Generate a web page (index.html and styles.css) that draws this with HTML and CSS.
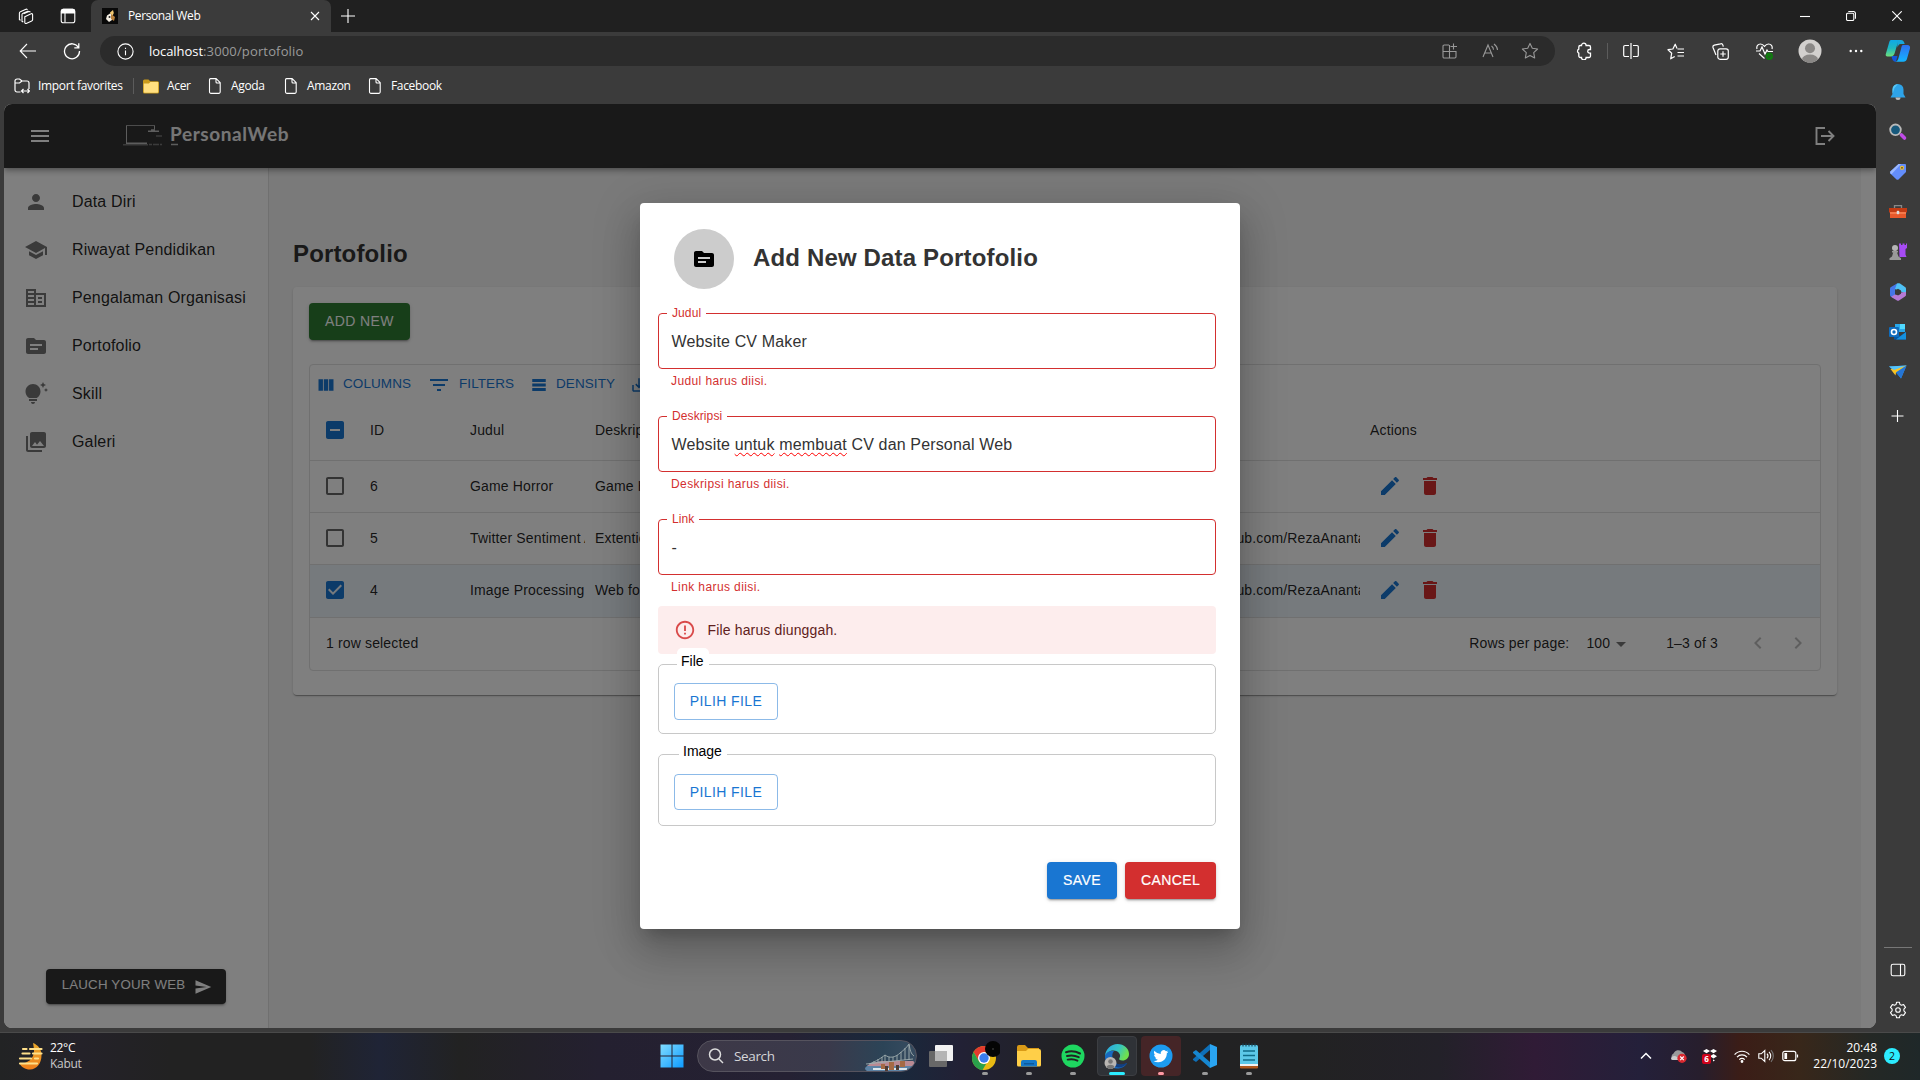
FILE: index.html
```html
<!DOCTYPE html>
<html lang="id">
<head>
<meta charset="utf-8">
<title>Personal Web</title>
<link rel="stylesheet" href="styles.css">
</head>
<body>
<svg class="sprite" aria-hidden="true">
  <symbol id="source" viewBox="0 0 24 24"><path d="M20 6h-8l-2-2H4c-1.1 0-1.99.9-1.99 2L2 18c0 1.1.9 2 2 2h16c1.1 0 2-.9 2-2V8c0-1.1-.9-2-2-2zm-6 10H6v-2h8v2zm4-4H6v-2h12v2z"/></symbol>
  <symbol id="edit" viewBox="0 0 24 24"><path d="M3 17.25V21h3.75L17.81 9.94l-3.75-3.75L3 17.25zM20.71 7.04c.39-.39.39-1.02 0-1.41l-2.34-2.34c-.39-.39-1.02-.39-1.41 0l-1.83 1.83 3.75 3.75 1.83-1.83z"/></symbol>
  <symbol id="trash" viewBox="0 0 24 24"><path d="M6 19c0 1.1.9 2 2 2h8c1.1 0 2-.9 2-2V7H6v12zM19 4h-3.5l-1-1h-5l-1 1H5v2h14V4z"/></symbol>
  <symbol id="unchecked" viewBox="0 0 24 24"><path d="M19 5v14H5V5h14m0-2H5c-1.1 0-2 .9-2 2v14c0 1.1.9 2 2 2h14c1.1 0 2-.9 2-2V5c0-1.1-.9-2-2-2z"/></symbol>
  <symbol id="page" viewBox="0 0 16 16"><path fill="none" stroke="currentColor" stroke-width="1.1" stroke-linejoin="round" d="M3.6.6h5.6l4 4v9.2a1.5 1.5 0 0 1-1.5 1.6H4a1.5 1.5 0 0 1-1.5-1.6V1.9A1.4 1.4 0 0 1 3.6.6zM9 .8v3.2a1 1 0 0 0 1 1h3"/></symbol>
</svg>

<div class="browser">
  <div class="tabstrip">
    <div class="cell tab-tool first"><svg class="line" width="16" height="16" viewBox="0 0 16 16"><path d="M5.6 5.8 11 3.6a1 1 0 0 1 1.3.6M2.6 12.2 1.4 11.6V5.2a1.5 1.5 0 0 1 1-1.4L8 1.2a1 1 0 0 1 1.4.7M5.3 14 4 13.3V6.6a1.5 1.5 0 0 1 1-1.3L10.4 3"/><path d="m6.8 8.7 6.3-2.9a1 1 0 0 1 1.5.9v5a1.5 1.5 0 0 1-.9 1.4l-5.4 2.3a1 1 0 0 1-1.5-1z"/></svg></div>
    <div class="cell tab-tool second"><svg class="line" width="16" height="16" viewBox="0 0 16 16"><rect x="1.2" y="1.2" width="13.6" height="13.6" rx="2.4"/><path d="M5 5v9.6"/><path fill="currentColor" d="M1.5 5V3a1.6 1.6 0 0 1 1.6-1.6h9.8A1.6 1.6 0 0 1 14.5 3v2z"/></svg></div>
    <div class="tab">
      <svg width="16" height="16" viewBox="0 0 16 16"><rect width="16" height="16" fill="#090909"/><path fill="#f1c871" d="M8 4.5 11 2l.8 3-1 2.2L8.500 7z"/><path fill="#f4eee3" d="M5 7.500l3-2 2.500 2-.5 4.500-3 2-3-3z"/><path fill="#b9813c" d="m9 6 4 3-1 4-3-2z"/><circle cx="7.500" cy="9" r="1" fill="#222"/></svg>
      <span class="tab-title">Personal Web</span>
      <svg class="line" width="10" height="10" viewBox="0 0 10 10"><path d="m1 1 8 8M9 1 1 9"/></svg>
    </div>
    <div class="cell newtab"><svg class="line" width="14" height="14" viewBox="0 0 14 14"><path d="M7 0v14M0 7h14"/></svg></div>
    <div class="winbtns">
      <div class="cell"><svg class="line" width="10" height="10" viewBox="0 0 10 10"><path d="M0 5.500h10"/></svg></div>
      <div class="cell"><svg class="line" width="10" height="10" viewBox="0 0 10 10"><rect x=".5" y="2.200" width="7.300" height="7.300" rx="1.300"/><path d="M2.300.5h5A2.200 2.200 0 0 1 9.500 2.700v5"/></svg></div>
      <div class="cell"><svg class="line" width="10" height="10" viewBox="0 0 10 10"><path d="m.3.3 9.400 9.400M9.700.3.3 9.700"/></svg></div>
    </div>
  </div>

  <div class="main">
    <div class="left">
      <div class="toolbar">
        <div class="cell nav-a"><svg class="line" width="18" height="16" viewBox="0 0 18 16"><path d="M17 8H1.200M8 1 1.200 8 8 15"/></svg></div>
        <div class="cell nav-b"><svg class="line" width="18" height="18" viewBox="0 0 18 18"><path stroke-width="1.300" d="M15.500 5.500A7.500 7.500 0 1 0 16.500 9M15.800 1.300v4.500h-4.500"/></svg></div>
        <div class="address">
          <svg class="line" width="17" height="17" viewBox="0 0 17 17"><circle cx="8.500" cy="8.500" r="7.600"/><path d="M8.500 7.500v4.800M8.500 4.700v1.300"/></svg>
          <span class="url"><b>localhost</b>:3000/portofolio</span>
          <div class="address-tools">
            <div class="cell"><svg class="line" width="16" height="16" viewBox="0 0 16 16"><path d="M7 2H2.200A1.200 1.200 0 0 0 1 3.200v10.600A1.200 1.200 0 0 0 2.200 15h10.600a1.200 1.200 0 0 0 1.200-1.200V8.500H1M7.500 2v13M11.500.5v6M8.500 3.500h6.500"/></svg></div>
            <div class="cell"><svg class="line" width="17" height="16" viewBox="0 0 17 16"><path d="m1 14 5-12 5 12M2.700 10h6.600M9.500 3c1.500 1 2 2 2 3.800M12 1c2 1.500 3.500 3.500 3.500 6"/></svg></div>
            <div class="cell"><svg class="line" width="18" height="18" viewBox="0 0 18 18"><path stroke-linejoin="round" d="m9 1.400 2.300 4.900 5.300.7-3.900 3.700 1 5.300L9 13.400 4.300 16l1-5.300L1.400 7l5.300-.7z"/></svg></div>
          </div>
        </div>
        <div class="cell t-ext"><svg class="line" width="16" height="18" viewBox="0 0 16 18"><path stroke-width="1.300" d="M5.500 3.500a2.300 2.300 0 0 1 4.600 0H13a1.500 1.500 0 0 1 1.500 1.500v2.500h-1a1.800 1.800 0 0 0 0 3.600h1V14a1.500 1.500 0 0 1-1.500 1.500h-2.900a2.300 2.300 0 0 1-4.600 0H4.300A1.500 1.500 0 0 1 2.800 14v-2.800a2.200 2.200 0 0 1 0-4V5a1.500 1.500 0 0 1 1.500-1.500z"/></svg></div>
        <i class="vbar"></i>
        <div class="cell t-split"><svg class="line" width="16" height="16" viewBox="0 0 16 16"><path stroke-width="1.200" d="M6 2.500H2A1.400 1.400 0 0 0 .7 4v8A1.400 1.400 0 0 0 2 13.500h4M10 2.500h4A1.400 1.400 0 0 1 15.300 4v8a1.400 1.400 0 0 1-1.300 1.500h-4M8 0v16"/></svg></div>
        <div class="cell t44"><svg class="line" width="18" height="17" viewBox="0 0 18 17"><path stroke-linejoin="round" stroke-width="1.200" d="M10 5.400 8.200 1.200 5.900 6l-4.900.7 3.700 3.500-1 5.600 4-2.400M10.500 6H17M10.500 9.500H17M10.500 13H17"/></svg></div>
        <div class="cell t44"><svg class="line" width="17" height="17" viewBox="0 0 17 17"><rect x="5.800" y="5.800" width="10.500" height="10.500" rx="2.200" stroke-width="1.200"/><path stroke-width="1.200" d="M11 8.300v5.500M8.300 11h5.500M4 12 1 4.500a2 2 0 0 1 1.300-2.400L8.500.8a2 2 0 0 1 2.400 1.300l.4 1.500"/></svg></div>
        <div class="cell t44"><svg class="line" width="17" height="17" viewBox="0 0 17 17"><path stroke-width="1.200" d="M1 6C.2 3 2 1 4.500 1c2 0 3 1 4 2.300C9.500 2 10.500 1 12.500 1 15 1 16.800 3 16 6M0 8h4l2-4 3 7 2-4 1 1.500h5M3 10.500l5.500 5"/><circle cx="13.300" cy="13.300" r="3.700" fill="#107c10" stroke="none"/><path d="m11.800 13.500 1.200 1 2-2.200" stroke="#3b3b3b" stroke-width=".8"/></svg></div>
        <div class="cell t-avatar"><svg width="24" height="24" viewBox="0 0 24 24"><defs><clipPath id="av"><circle cx="12" cy="12" r="11.500"/></clipPath></defs><circle cx="12" cy="12" r="11.500" fill="#d2d0ce"/><g clip-path="url(#av)" fill="#8a8886"><circle cx="12" cy="9.200" r="5"/><ellipse cx="12" cy="20.500" rx="8" ry="5"/></g></svg></div>
        <div class="cell t-dots"><svg width="14" height="4" viewBox="0 0 14 4" fill="#fff"><circle cx="1.700" cy="2" r="1.200"/><circle cx="7" cy="2" r="1.200"/><circle cx="12.300" cy="2" r="1.200"/></svg></div>
      </div>

      <div class="favbar">
        <svg class="line fav-import" width="16" height="16" viewBox="0 0 16 16"><path stroke-width="1.200" d="M6.500 14H3a2 2 0 0 1-2-2V3a2 2 0 0 1 2-2h2.500L8 3h5a2 2 0 0 1 2 2v6M1 5h4.500L8 3M7.500 13h8M9.500 11l-2 2 2 2M13.500 11l2 2-2 2"/></svg>
        <span class="f-import">Import favorites</span>
        <i class="vbar"></i>
        <svg class="fav-folder" width="16" height="15" viewBox="0 0 16 15"><path fill="#c99a1c" d="M0 2a1.500 1.500 0 0 1 1.500-1.500h4l1.700 1.700H14.500A1.500 1.500 0 0 1 16 3.700V13a1.500 1.500 0 0 1-1.500 1.500h-13A1.500 1.500 0 0 1 0 13z"/><path fill="#ffdf80" d="M.8 4.500h5l1.600-1.400h7.800V13a.8.8 0 0 1-.8.800H1.600a.8.800 0 0 1-.8-.8z"/></svg>
        <span class="f-acer">Acer</span>
        <svg class="fav-page" width="16" height="16"><use href="#page"/></svg><span class="f-agoda">Agoda</span>
        <svg class="fav-page" width="16" height="16"><use href="#page"/></svg><span class="f-amazon">Amazon</span>
        <svg class="fav-page" width="16" height="16"><use href="#page"/></svg><span>Facebook</span>
      </div>

      <div class="viewport">
        <header class="appbar">
          <svg class="burger" width="24" height="24" viewBox="0 0 24 24" fill="#fff"><path d="M3 18h18v-2H3v2zm0-5h18v-2H3v2zm0-7v2h18V6H3z"/></svg>
          <svg class="laptop" width="58" height="24" viewBox="0 0 58 24" fill="none" stroke="#bbb"><path stroke-width="1" d="M4.500 21V1.500M32.500 1.500v4"/><path stroke="#999" d="M4 1.500h29"/><path stroke-width="1.400" d="M4 19.200h21"/><path stroke="#777" stroke-width="1.400" d="M1 20.800h25M27 20.500h3M31 20.500h6M38 20.500h2M34 12h6"/><path stroke-width="1.400" d="M26 7.200h11M29 6h4M49 20.500h7"/></svg>
          <span class="brand">PersonalWeb</span>
          <svg class="logout" width="22" height="20" viewBox="0 0 22 20" fill="none" stroke="#fff" stroke-width="1.900"><path d="M11 2H2.500v16H11M7 10h12.500M14.500 5l5 5-5 5"/></svg>
        </header>
        <div class="shell">
          <nav class="drawer">
            <ul>
              <li><svg class="mi" viewBox="0 0 24 24"><path d="M12 12c2.210 0 4-1.790 4-4s-1.790-4-4-4-4 1.790-4 4 1.790 4 4 4zm0 2c-2.670 0-8 1.340-8 4v2h16v-2c0-2.660-5.330-4-8-4z"/></svg>Data Diri</li>
              <li><svg class="mi" viewBox="0 0 24 24"><path d="M5 13.180v4L12 21l7-3.820v-4L12 17l-7-3.820zM12 3L1 9l11 6 9-4.910V17h2V9L12 3z"/></svg>Riwayat Pendidikan</li>
              <li><svg class="mi" viewBox="0 0 24 24"><path fill-rule="evenodd" d="M2 3h10v4h10v14H2zM4 5v2h6V5zM4 9v2h6V9zM4 13v2h6v-2zM4 17v2h6v-2zM12 9v10h8V9zM14 11h4v2h-4zM14 15h4v2h-4z"/></svg>Pengalaman Organisasi</li>
              <li><svg class="mi"><use href="#source"/></svg>Portofolio</li>
              <li><svg class="mi" viewBox="0 0 24 24"><path d="M7 20h4c0 1.100-.9 2-2 2s-2-.9-2-2zm-2-1h8v-2H5v2zm11.500-9.500c0 3.820-2.660 5.860-3.770 6.500H5.270c-1.110-.64-3.770-2.680-3.770-6.500C1.500 5.360 4.860 2 9 2s7.500 3.360 7.500 7.500zm4.870-2.130L20 8l1.370.63L22 10l.63-1.370L24 8l-1.370-.63L22 6l-.63 1.370zM19 6l.94-2.060L22 3l-2.060-.94L19 0l-.94 2.060L16 3l2.060.94L19 6z"/></svg>Skill</li>
              <li><svg class="mi" viewBox="0 0 24 24"><path d="M22 16V4c0-1.100-.9-2-2-2H8c-1.100 0-2 .9-2 2v12c0 1.100.9 2 2 2h12c1.100 0 2-.9 2-2zm-11-4l2.030 2.710L16 11l4 5H8l3-4zM2 6v14c0 1.100.9 2 2 2h14v-2H4V6H2z"/></svg>Galeri</li>
            </ul>
            <button class="btn launch">LAUCH YOUR WEB<svg width="18" height="18" viewBox="0 0 24 24" fill="#fff"><path d="M2.010 21L23 12 2.010 3 2 10l15 2-15 2z"/></svg></button>
          </nav>
          <main class="content">
            <h1>Portofolio</h1>
            <section class="card">
              <button class="btn addnew">ADD NEW</button>
              <div class="grid">
                <div class="gridtools">
                  <span class="gt gt-col"><svg width="20" height="20" viewBox="0 0 24 24"><path d="M14.670 5v14H9.330V5zM15.670 19H21V5h-5.330zM8.330 19V5H3v14z"/></svg>COLUMNS</span>
                  <span class="gt gt-fil"><svg width="24" height="24" viewBox="0 0 24 24"><path d="M10 18h4v-2h-4v2zM3 6v2h18V6H3zm3 7h12v-2H6v2z"/></svg>FILTERS</span>
                  <span class="gt gt-den"><svg width="18" height="18" viewBox="0 0 24 24"><path d="M21 8H3V4h18zM21 14H3v-4h18zM21 20H3v-4h18z"/></svg>DENSITY</span>
                  <span class="gt"><svg width="18" height="18" viewBox="0 0 24 24"><path d="M19 12v7H5v-7H3v7c0 1.100.9 2 2 2h14c1.100 0 2-.9 2-2v-7h-2zm-6 .67l2.590-2.580L17 11.500l-5 5-5-5 1.410-1.410L11 12.670V3h2z"/></svg></span>
                </div>
                <div class="row head">
                  <span class="chk on"><svg viewBox="0 0 24 24"><path d="M19 3H5c-1.100 0-2 .9-2 2v14c0 1.100.9 2 2 2h14c1.100 0 2-.9 2-2V5c0-1.100-.9-2-2-2zm-2 10H7v-2h10v2z"/></svg></span>
                  <span>ID</span><span>Judul</span><span>Deskripsi</span><span></span><span>Actions</span>
                </div>
                <div class="row">
                  <span class="chk"><svg><use href="#unchecked"/></svg></span>
                  <span>6</span><span>Game Horror</span><span>Game Horror</span><span></span>
                  <span class="act"><svg class="ed"><use href="#edit"/></svg><svg class="de"><use href="#trash"/></svg></span>
                </div>
                <div class="row">
                  <span class="chk"><svg><use href="#unchecked"/></svg></span>
                  <span>5</span><span>Twitter Sentiment Analysis</span><span>Extention</span><span>https://github.com/RezaAnanta</span>
                  <span class="act"><svg class="ed"><use href="#edit"/></svg><svg class="de"><use href="#trash"/></svg></span>
                </div>
                <div class="row selected">
                  <span class="chk on"><svg viewBox="0 0 24 24"><path d="M19 3H5c-1.110 0-2 .9-2 2v14c0 1.100.89 2 2 2h14c1.110 0 2-.9 2-2V5c0-1.100-.89-2-2-2zm-9 14l-5-5 1.410-1.410L10 14.170l7.590-7.590L19 8l-9 9z"/></svg></span>
                  <span>4</span><span>Image Processing</span><span>Web for</span><span>https://github.com/RezaAnanta</span>
                  <span class="act"><svg class="ed"><use href="#edit"/></svg><svg class="de"><use href="#trash"/></svg></span>
                </div>
                <div class="gridfoot">
                  <span>1 row selected</span>
                  <span class="rpp">Rows per page:</span>
                  <span class="per">100</span>
                  <svg class="caret" width="10" height="5" viewBox="0 0 10 5"><path d="m0 0 5 5 5-5z"/></svg>
                  <span class="range">1–3 of 3</span>
                  <svg class="chev" width="24" height="24" viewBox="0 0 24 24"><path d="M15.410 7.410L14 6l-6 6 6 6 1.410-1.410L10.830 12z"/></svg>
                  <svg class="chev" width="24" height="24" viewBox="0 0 24 24"><path d="M10 6L8.590 7.410 13.170 12l-4.580 4.590L10 18l6-6z"/></svg>
                </div>
              </div>
            </section>
          </main>
        </div>

        <div class="backdrop">
          <form class="modal">
            <div class="modal-head">
              <span class="disc"><svg width="24" height="24"><use href="#source"/></svg></span>
              <h2>Add New Data Portofolio</h2>
            </div>
            <div class="field"><label>Judul</label><div class="input">Website CV Maker</div><p>Judul harus diisi.</p></div>
            <div class="field"><label>Deskripsi</label><div class="input">Website <u>untuk</u> <u>membuat</u> CV dan Personal Web</div><p>Deskripsi harus diisi.</p></div>
            <div class="field"><label>Link</label><div class="input">-</div><p>Link harus diisi.</p></div>
            <div class="alert"><svg width="22" height="22" viewBox="0 0 24 24"><path d="M11 15h2v2h-2zm0-8h2v6h-2zm.99-5C6.470 2 2 6.480 2 12s4.470 10 9.990 10C17.520 22 22 17.520 22 12S17.520 2 11.990 2zM12 20c-4.420 0-8-3.580-8-8s3.580-8 8-8 8 3.580 8 8-3.580 8-8 8z"/></svg>File harus diunggah.</div>
            <div class="upload upload-file"><label>File</label><span class="btn outlined">PILIH FILE</span></div>
            <div class="upload upload-image"><label>Image</label><span class="btn outlined">PILIH FILE</span></div>
            <div class="actions"><span class="btn save">SAVE</span><span class="btn cancel">CANCEL</span></div>
          </form>
        </div>
      </div>
    </div>

    <aside class="edgebar">
      <svg width="26" height="26" viewBox="0 0 26 26"><defs><linearGradient id="c1" x1="0" y1="0" x2="0" y2="1"><stop offset="0" stop-color="#0fa8e8"/><stop offset=".5" stop-color="#1fb8c0"/><stop offset="1" stop-color="#6fe07a"/></linearGradient><linearGradient id="c2" x1="0" y1="0" x2="0" y2="1"><stop offset="0" stop-color="#2f6ff0"/><stop offset="1" stop-color="#12b5ff"/></linearGradient></defs><path fill="url(#c2)" d="M18 7h4.500a2.600 2.600 0 0 1 2.500 3.300l-3 10.500a4 4 0 0 1-3.700 3H9.500c2.500 0 3.400-1.800 4-3.800L16 11c.6-2.400 1-4 2-4z"/><path fill="#1456d8" d="M8 18h4.500L11 23.500C9 24.500 7 22 6.500 18z"/><path fill="url(#c1)" d="M6 2h10c-2 0-3 1.500-3.600 4L9.700 15c-.7 2.300-1.800 3.500-4 3.500H2.500A2 2 0 0 1 .8 16L4 5c.5-1.800 1-3 2-3z"/><path fill="#17a7dc" d="M12 2h4c2 0 3 1.500 3.700 4h-4c-2 0-2.700 2-3.200 3.500z"/></svg>
      <svg width="20" height="20" viewBox="0 0 20 20"><path fill="#2ea3e8" d="M10 2a5.500 5.500 0 0 1 5.500 5.500V12l2 3.500h-15l2-3.500V7.500A5.500 5.500 0 0 1 10 2z"/><path fill="#57c8f6" d="M10 2a5.500 5.500 0 0 0-5.500 5.500V12l2-6z"/><path fill="#bdbdbd" d="M7.500 15.600h5a2.500 2.500 0 0 1-5 0z"/></svg>
      <svg width="20" height="20" viewBox="0 0 20 20"><path stroke="#c04be8" stroke-width="3.600" stroke-linecap="round" d="m13.500 13 3 3"/><circle cx="7.500" cy="7.800" r="5.300" fill="#17597c" stroke="#b9b9b9" stroke-width="1.800"/></svg>
      <svg width="20" height="20" viewBox="0 0 20 20"><path fill="#638dfb" d="M10.500 2H17a1 1 0 0 1 1 1v7L10.500 17.400a1.500 1.500 0 0 1-2 0L2.300 11.500a1.500 1.500 0 0 1 0-2z"/><path fill="#9ab8ff" d="M2.300 9.500 10.500 2H13l-9.500 10.200-1.200-1z"/><circle cx="14" cy="5.800" r="1.500" fill="#444" stroke="#f4c430" stroke-width="1.200"/></svg>
      <svg width="20" height="20" viewBox="0 0 20 20"><path fill="none" stroke="#888" stroke-width="1.300" d="M6.500 6V3.700h7V6"/><path fill="#c23b14" d="M1 6h18v4.500H1z"/><path fill="#e8592b" d="M2 10.500h16V16H2z"/><path fill="#f47a4c" d="M2 10h16v2H2z"/><rect x="8.700" y="8.700" width="2.600" height="3.600" rx="1" fill="#ddd"/></svg>
      <svg width="20" height="20" viewBox="0 0 20 20"><path fill="#a64bf4" d="M11 1.500h2V3h1.500V1.500h2V3H18V1.500h1V6l-1.500 1v5.500l1 2.500h-7z"/><circle cx="7" cy="6" r="3" fill="#b5b5b5"/><path fill="#999" d="M4 9h6v1.500H9l1.500 4 2.500 1.800V18H1.500v-1.700l2.500-1.800 1.200-4H4z"/></svg>
      <svg width="20" height="20" viewBox="0 0 20 20"><path fill="#4576e8" d="M9 1.500 3 5a2 2 0 0 0-1 2v6a2 2 0 0 0 1 1.700l4 2.300V7.500L11.500 5z"/><path fill="#4fc1f5" d="M9 1.500c1-.5 2-.5 3 0L17 5a2 2 0 0 1 1 2v5l-5-2.500L7 7z"/><path fill="#b67ad6" d="M3 14.800 9 18.400c.7.400 1.500.4 2 0l6-3.800a2 2 0 0 0 1-2V10l-5 .5-2.500 2.500L7 12.500z"/><path fill="#3b3b3b" d="m10 6.700 3 1.700v3.300l-3 1.700-3-1.700V8.400z"/></svg>
      <svg width="20" height="20" viewBox="0 0 20 20"><path fill="#28a8ea" d="M7 2h10v8H7z"/><path fill="#50d9ff" d="M12 2h5v5h-5z"/><path fill="#0358a7" d="m6 9 6 5 6-4v7.500H6z"/><path fill="#1490df" d="M18 10v7.500H8z"/><rect x="1" y="5" width="10" height="10" rx="1" fill="#0f6cbd"/><circle cx="6" cy="10" r="2.500" fill="none" stroke="#fff" stroke-width="1.600"/></svg>
      <svg width="20" height="20" viewBox="0 0 20 20"><path fill="#2e9cf0" d="M1 4.500 18.500 3.500l-5.500 13-4-5z"/><path fill="#f7c325" d="M2.500 7 18.500 3.500 8 10.500l-.5 3z"/><path fill="#2575d6" d="m18.500 3.500-5.500 13-5-6z"/><path fill="#54c4fb" d="M1 4.500 18.500 3.500 6 8z"/></svg>
      <svg class="line" width="20" height="20" viewBox="0 0 20 20"><path d="M9.500 4v12M3.500 10h12"/></svg>
      <div class="edge-bottom">
        <i></i>
        <svg class="line" width="16" height="16" viewBox="0 0 16 16"><rect x="1.200" y="2.200" width="13.600" height="11.600" rx="1.800"/><path d="M10.500 2v12"/></svg>
        <svg class="line" width="18" height="18" viewBox="0 0 18 18"><circle cx="9" cy="9" r="2.300"/><path stroke-linejoin="round" d="m7.600 1.200-.5 2.200-1.500.9-2.200-.7L1.500 6.400l1.600 1.700v1.800l-1.600 1.700 1.900 2.800 2.200-.7 1.500.9.500 2.200h2.800l.5-2.200 1.500-.9 2.200.7 1.900-2.800-1.600-1.700V8.100l1.600-1.700-1.900-2.800-2.200.7-1.500-.9-.5-2.200z"/></svg>
      </div>
    </aside>
  </div>

  <footer class="taskbar">
    <div class="weather">
      <svg width="25" height="27" viewBox="0 0 25 27"><defs><linearGradient id="mn" x1="0" y1="0" x2="0" y2="1"><stop offset="0" stop-color="#e9a92c"/><stop offset="1" stop-color="#f07f1a"/></linearGradient></defs><path fill="url(#mn)" d="M15 0c5 2 8.500 6 8.500 12.500C23.500 20 19 26.500 12 26.500c-5 0-8.500-2.500-10.500-6C9 21 16 16 16 8c0-3-.5-5-1-8z"/><path stroke="#ffe08a" stroke-width="2.200" stroke-linecap="round" d="M5 6h3.500M12 6h11.500M4.500 10.500h7M15 10.500h8.500M2 15.500h11M17 15.500h3M2 20.500h17"/></svg>
      <div><span class="temp">22°C</span><span class="cond">Kabut</span></div>
    </div>
    <div class="dock">
      <svg class="start" width="24" height="24" viewBox="0 0 24 24"><defs><linearGradient id="wl" x1="0" y1="0" x2="1" y2="1"><stop offset="0" stop-color="#80dcff"/><stop offset="1" stop-color="#0d9bff"/></linearGradient></defs><path fill="url(#wl)" d="M.5.5h11v11H.5zM12.500.5h11v11h-11zM.5 12.500h11v11H.5zM12.500 12.500h11v11h-11z"/></svg>
      <div class="search">
        <svg width="16" height="16" viewBox="0 0 16 16" fill="none" stroke="#ddd" stroke-width="1.500"><circle cx="7" cy="6.500" r="5.500"/><path d="m11 11 4 4"/></svg>
        <span>Search</span>
        <svg class="bridge" width="50" height="28" viewBox="0 0 50 28"><defs><clipPath id="bc"><path d="M0 24c4-5 12-7 20-7h28c3 2 2 8-2 11H6c-4 0-6-2-6-4z"/></clipPath></defs><g clip-path="url(#bc)"><rect width="50" height="28" fill="#5d83a5"/><path fill="#b98a93" d="M0 17h50v5H0z"/><path fill="#dbe6ec" d="M8 24h34v2H8z"/><path fill="#a46a45" d="M16 20h4v5h-4zM24 18h5v8h-5zM35 17h5v6h-5z"/><path fill="#4f3b33" d="M20 22h3v5h-3zM31 21h3v5h-3z"/></g><path fill="none" stroke="#a2afb0" stroke-width=".9" d="M1 20 48 15M4 20c8-3 12-6 16-9 5 4 11 2 15-2 4-3 7-6 9-9 1 6 2 10 5 12M9 17v3M13 15v4M17 13v6M20 11v8M24 13v5M28 13v5M32 11v6M36 8v8M40 4v12M44 1v15"/></svg>
      </div>
      <div class="app view"><svg width="24" height="24" viewBox="0 0 24 24"><rect x="0" y="7" width="18" height="16" rx="1" fill="#686868"/><rect x="6" y="1" width="18" height="16" rx="1" fill="#f2f2f2"/><path fill="#b5b5b5" d="M6 7h12v10H6z"/></svg></div>
      <div class="app"><svg width="30" height="32" viewBox="0 0 30 32"><circle cx="14" cy="18" r="12" fill="#e8b913"/><path fill="#e33b2e" d="M14 6a12 12 0 0 1 10.400 6H14L8.800 21 3.600 12A12 12 0 0 1 14 6z"/><path fill="#2aa14b" d="M3.600 12 8.800 21a6 6 0 0 0 7.500 2.500L12.500 30A12 12 0 0 1 3.600 12z"/><circle cx="14" cy="18" r="6" fill="#fff"/><circle cx="14" cy="18" r="4.700" fill="#3b7ded"/><circle cx="23" cy="9" r="8" fill="#050505"/><circle cx="23" cy="9" r=".8" fill="#555"/></svg><i></i></div>
      <div class="app"><svg width="26" height="24" viewBox="0 0 26 24"><path fill="#d99a17" d="M1 3a2 2 0 0 1 2-2h6l3 3h11v5H1z"/><path fill="#ffcf48" d="M1 7h9l2-2h11a2 2 0 0 1 2 2v14a1.500 1.500 0 0 1-1.500 1.500h-21A1.500 1.500 0 0 1 1 21z"/><path fill="#1679c8" d="M5 22.500V18a2 2 0 0 1 2-2h12a2 2 0 0 1 2 2v4.500z"/><path fill="#0d5a9c" d="M8 19h10v1.500H8z"/></svg><i></i></div>
      <div class="app"><svg width="24" height="24" viewBox="0 0 24 24"><circle cx="12" cy="12" r="11.500" fill="#1ed760"/><path fill="none" stroke="#222" stroke-linecap="round" stroke-width="2" d="M5 8.200c4.500-1.400 9.500-1 14 1.300M6 12c4-1.100 8-.7 11.700 1.200M6.700 15.600c3.300-.8 6.700-.5 9.700 1"/></svg><i></i></div>
      <div class="app active"><svg width="26" height="26" viewBox="0 0 26 26"><defs><linearGradient id="eg" x1="0" y1="0" x2="1" y2=".4"><stop offset="0" stop-color="#2ba4e8"/><stop offset=".6" stop-color="#36c6c0"/><stop offset="1" stop-color="#6fe04e"/></linearGradient></defs><path fill="#1769c0" d="M1 14C1 9 6 7.500 10 8c-2 2-2.500 7 0 10.500 3 4 9 4.500 13 1.500-2 4-6 5.500-10 5.500C6 25.500 1 20 1 14z"/><path fill="url(#eg)" d="M1 13C1.500 6 7 1 13.500 1 20 1 25 5.500 25 11c0 4-3 6.500-6.500 6.500-3 0-4-1.300-3-2.500 2-3-1-7.500-6-7.500C5 7.500 2 10 1 13z"/><path fill="#123f80" d="M9.500 16c.5 4.500 6 7 13.500 4-3 5-10 6-14 2z"/><circle cx="6.500" cy="20" r="6" fill="#b9b6b3"/><circle cx="6.500" cy="18.500" r="2.300" fill="#777"/><path fill="#777" d="M2.500 24c1-3 7-3 8 0-2 2.500-6 2.500-8 0z"/></svg><i></i></div>
      <div class="app alerting"><svg width="24" height="24" viewBox="0 0 24 24"><circle cx="12" cy="12" r="11.500" fill="#1d9bf0"/><path fill="#fff" transform="translate(4.600 4.600) scale(.62)" d="M23.600 4.900c-.9.400-1.800.6-2.800.8 1-.6 1.800-1.600 2.200-2.700-1 .6-2 1-3.100 1.200a4.900 4.900 0 0 0-8.400 4.500C7.500 8.500 3.800 6.500 1.400 3.600a4.900 4.900 0 0 0 1.500 6.500c-.8 0-1.600-.2-2.200-.6 0 2.300 1.600 4.400 3.900 4.900-.7.200-1.500.2-2.200.1.600 2 2.400 3.400 4.600 3.400A9.900 9.900 0 0 1-.2 19.900 14 14 0 0 0 7.300 22.100c9.100 0 14.300-7.700 14-14.600.9-.7 1.700-1.600 2.300-2.600z"/></svg><i></i></div>
      <div class="app"><svg width="26" height="26" viewBox="0 0 26 26"><path fill="#0e70b8" d="m18 1 0 6L4 19l-3-2v-1z"/><path fill="#1687d0" d="m18 25 0-6L4 7 1 9v1z"/><path fill="#2aa5f2" d="m18 1 7 3v18l-7 3z"/></svg><i></i></div>
      <div class="app"><svg width="20" height="26" viewBox="0 0 20 26"><rect x="1" y="2" width="18" height="23" rx="1.500" fill="#5cc8e8"/><path fill="#f0f0f0" d="M1 21h18v2H1z"/><path fill="#b0581c" d="M1 23h18v1.500a1 1 0 0 1-1 1H2a1 1 0 0 1-1-1z"/><path stroke="#0f6b88" stroke-width="1.500" d="M4 8h12M4 12.500h12M4 17h12"/><path stroke="#16495c" stroke-width="1.200" d="M4 .5v3M7 .5v3M10 .5v3M13 .5v3M16 .5v3"/></svg><i></i></div>
    </div>
    <div class="tray">
      <div class="cell tr-a"><svg width="12" height="8" viewBox="0 0 12 8" fill="none" stroke="#fff" stroke-width="1.500"><path d="m1 6.500 5-5 5 5"/></svg></div>
      <div class="cell tr-b"><svg width="17" height="14" viewBox="0 0 17 14"><path fill="#9a9a9a" d="M4 11a3.500 3.500 0 0 1-.5-6.500A5 5 0 0 1 12 3c2 .5 3 2 3 4v4z"/><path fill="#ccc" d="M1 10c0-3 4-4 6-2l4 3H3a2 2 0 0 1-2-1z"/><circle cx="12" cy="9.300" r="4.600" fill="#d9282f"/><path stroke="#fff" stroke-width="1.200" d="m10.200 7.500 3.600 3.600M13.800 7.500l-3.600 3.600"/></svg></div>
      <div class="cell tr-c"><span class="dropbox"><svg width="16" height="14" viewBox="0 0 16 14" fill="#fff"><path d="m4.500 0 3.500 2-3.500 2.200L1 2zM11.500 0 15 2l-3.500 2.200L8 2zM11.500 5 15 7.200l-3.500 2.200L8 7.200zM11 10.500l2 .7-2 1.300z"/></svg><b>6</b></span></div>
      <div class="cell tr-d"><svg width="16" height="13" viewBox="0 0 16 13" fill="none" stroke="#fff" stroke-width="1.200"><path d="M.6 4.600c4-4.500 10.800-4.500 14.800 0M3 7.200c2.700-3 7.300-3 10 0M5.300 9.600c1.500-1.600 3.900-1.600 5.400 0"/><circle cx="8" cy="11.500" r=".8" fill="#fff"/></svg></div>
      <div class="cell tr-e"><svg width="16" height="14" viewBox="0 0 16 14" fill="none" stroke="#fff" stroke-width="1.100"><path d="M.8 4.800v4.400h2.400l3.600 3.300V1.500L3.200 4.800zM9 4.700a3.500 3.500 0 0 1 0 4.600M11 2.800a6 6 0 0 1 0 8.400"/><path stroke="#777" d="M13 1.200a8.500 8.500 0 0 1 0 11.600"/></svg></div>
      <div class="cell tr-f"><svg width="17" height="12" viewBox="0 0 17 12" fill="none" stroke="#fff" stroke-width="1.200"><rect x=".8" y="1.300" width="13" height="9.400" rx="2"/><path fill="#fff" d="M3 3.500h1.500v5H3zM15.500 4.500v3"/></svg></div>
      <div class="clock"><span>20:48</span><span>22/10/2023</span></div>
      <span class="count">2</span>
    </div>
  </footer>
</div>
</body>
</html>
```
FILE: styles.css
```css
* { box-sizing: border-box; }
html, body { margin: 0; height: 100%; overflow: hidden; }
body { font-family: "Liberation Sans", Arial, sans-serif; color: rgba(0,0,0,.87); background: #3b3b3b; }
h1, h2, p, ul { margin: 0; padding: 0; }
i { font-style: normal; display: block; }
svg { display: block; flex: none; }
.sprite { position: absolute; width: 0; height: 0; }
.line { fill: none; stroke: currentColor; stroke-width: 1.1; }
.cell { display: flex; align-items: center; justify-content: center; flex: none; }
.browser { width: 1920px; height: 1080px; display: flex; flex-direction: column; color: #fff; }

/* Tab strip */
.tabstrip { height: 32px; flex: none; background: #202020; display: flex; font: 12px/32px "Open Sans", "Noto Sans", sans-serif; }
.tab-tool.first { width: 52px; }
.tab-tool.second { width: 32px; }
.tab { width: 240px; margin-left: 7px; background: #3b3b3b; border-radius: 7px 7px 0 0; display: flex; align-items: center; padding: 0 11px; }
.tab-title { margin-left: 10px; flex: 1; letter-spacing: -.4px; }
.newtab { width: 34px; }
.winbtns { margin-left: auto; display: flex; }
.winbtns .cell { width: 46px; }

.main { flex: none; height: 1000px; display: flex; }
.left { width: 1876px; flex: none; display: flex; flex-direction: column; }

/* Toolbar */
.toolbar { height: 38px; display: flex; align-items: center; }
.nav-a { width: 56px; }
.nav-b { width: 32px; }
.address { margin-left: 12px; width: 1455px; flex: none; height: 30px; border-radius: 15px; background: #2b2b2b; display: flex; align-items: center; padding-left: 17px; }
.url { margin-left: 15px; font: 13px/30px "Open Sans", "Noto Sans", sans-serif; color: #9b9b9b; letter-spacing: .15px; }
.url b { font-weight: 400; color: #fff; letter-spacing: -.05px; }
.address-tools { margin-left: auto; margin-right: 5px; display: flex; color: #999; }
.address-tools .cell { width: 40px; }
.t-ext { width: 58px; }
.vbar { width: 1px; height: 16px; background: #5c5c5c; margin-left: -6px; flex: none; }
.t-split { width: 46px; }
.t44 { width: 44px; }
.t-avatar { width: 46px; margin-left: 1px; }
.t-dots { width: 43px; padding-left: 3px; }

/* Favorites */
.favbar { height: 34px; display: flex; align-items: center; padding: 0 0 2px 14px; font: 12px/32px "Open Sans", "Noto Sans", sans-serif; letter-spacing: -.33px; white-space: nowrap; }
.f-import { margin-left: 8px; width: 95px; }
.favbar .vbar { margin-left: 0; }
.fav-folder { margin: 0 8px 0 9px; }
.f-acer { width: 40px; }
.fav-page { margin-right: 8px; }
.f-agoda { width: 52px; }
.f-amazon { width: 60px; }

/* Page */
.viewport { position: relative; width: 1872px; height: 924px; margin-left: 4px; border-radius: 8px; overflow: hidden; background: #fff; color: rgba(0,0,0,.87); display: flex; flex-direction: column; }
.appbar { height: 64px; flex: none; background: #333; display: flex; align-items: center; padding-left: 24px; position: relative; z-index: 1; box-shadow: 0 2px 4px -1px rgba(0,0,0,.2), 0 4px 5px rgba(0,0,0,.14), 0 1px 10px rgba(0,0,0,.12); }
.laptop { margin-left: 70px; }
.brand { font: 700 19px/24px Lato, sans-serif; color: #ededed; letter-spacing: .6px; margin: -4px 0 0 -10px; }
.logout { margin-left: auto; margin-right: 40px; }
.shell { flex: 1; display: flex; }
.drawer { width: 265px; border-right: 1px solid #e0e0e0; padding-top: 10px; display: flex; flex-direction: column; }
.drawer ul { list-style: none; }
.drawer li { height: 48px; display: flex; align-items: center; gap: 24px; padding-left: 20px; font-size: 16px; letter-spacing: .15px; white-space: nowrap; }
.mi { width: 24px; height: 24px; fill: #757575; }
.btn { display: inline-flex; align-items: center; justify-content: center; border: 0; padding: 0; border-radius: 4px; color: #fff; font: 400 14px/24.5px "Liberation Sans", Arial, sans-serif; letter-spacing: .4px; height: 37px; box-shadow: 0 3px 1px -2px rgba(0,0,0,.2), 0 2px 2px rgba(0,0,0,.14), 0 1px 5px rgba(0,0,0,.12); white-space: nowrap; }
.launch { margin: auto 0 24px 42px; width: 180px; height: 35px; background: #333; gap: 9px; padding-left: 2px; padding-bottom: 3px; font-size: 13.3px; letter-spacing: .2px; }
.launch svg { margin-top: 4px; }
.content { width: 1592px; background: #f5f5f5; padding: 70px 24px 0; }
.content h1 { font: 700 24px/32px "Liberation Sans", Arial, sans-serif; color: #333; letter-spacing: .15px; }
.card { margin-top: 17px; height: 408px; background: #fff; border-radius: 4px; padding: 16px; box-shadow: 0 2px 1px -1px rgba(0,0,0,.2), 0 1px 1px rgba(0,0,0,.14), 0 1px 3px rgba(0,0,0,.12); }
.addnew { display: flex; width: 101px; background: #2e7d32; }
.grid { margin-top: 24px; height: 307px; border: 1px solid #e0e0e0; border-radius: 4px; font-size: 14px; letter-spacing: .15px; overflow: hidden; }
.gridtools { height: 39px; padding: 0 0 3px 6px; display: flex; align-items: center; color: #1976d2; font-size: 13.5px; letter-spacing: .08px; }
.gt { display: flex; align-items: center; gap: 8px; flex: none; }
.gt svg { fill: #1976d2; margin-top: 3px; }
.gt-col { width: 111px; gap: 7px; }
.gt-fil { width: 103px; }
.gt-den { width: 100px; }
.row { height: 52px; border-bottom: 1px solid #e0e0e0; padding-bottom: 2px; display: grid; grid-template-columns: 50px 100px 125px 575px 200px 461px; align-items: center; }
.row span { padding-left: 10px; overflow: hidden; white-space: nowrap; }
.row .chk { padding-left: 13px; }
.chk svg { width: 24px; height: 24px; fill: #666; }
.chk.on svg { fill: #1976d2; }
.row.head { height: 57px; padding-bottom: 4px; }
.row.selected { height: 53px; background: rgba(25,118,210,.08); }
.row .act { display: flex; gap: 16px; padding-left: 18px; }
.act svg { width: 24px; height: 24px; }
.ed { fill: #1976d2; }
.de { fill: #d32f2f; }
.gridfoot { height: 50px; display: flex; align-items: center; padding: 0 10px 0 16px; }
.rpp { margin-left: auto; }
.per { margin-left: 17px; }
.caret { margin: 2px 0 0 6px; fill: #757575; }
.range { margin: 0 28px 0 40px; }
.chev { fill: #bdbdbd; }
.chev + .chev { margin-left: 16px; }

/* Dialog */
.backdrop { position: absolute; inset: 0; z-index: 2; background: rgba(0,0,0,.5); display: flex; align-items: center; justify-content: center; }
.modal { width: 600px; height: 726px; background: #fff; border-radius: 4px; padding: 26px 24px 0 18px; box-shadow: 0 11px 15px -7px rgba(0,0,0,.2), 0 24px 38px 3px rgba(0,0,0,.14), 0 9px 46px 8px rgba(0,0,0,.12); }
.modal-head { display: flex; align-items: center; gap: 20px; padding-left: 16px; margin-bottom: 24px; }
.disc { width: 60px; height: 60px; border-radius: 50%; background: #ccc; display: flex; align-items: center; justify-content: center; }
.modal h2 { font: 700 24px/32px "Liberation Sans", Arial, sans-serif; color: #333; letter-spacing: .16px; padding-bottom: 2px; margin-left: -1px; }
.field { position: relative; height: 79px; margin-bottom: 24px; }
.field:nth-of-type(4) { margin-bottom: 8px; }
.field label { position: absolute; left: 9px; top: -8px; padding: 0 5px; background: #fff; color: #d32f2f; font-size: 12px; line-height: 16px; letter-spacing: .1px; }
.input { height: 56px; border: 1px solid #d32f2f; border-radius: 4px; padding-left: 12.5px; font-size: 16px; line-height: 56px; letter-spacing: .15px; color: #333; }
.input u { text-decoration: underline wavy #f00 1px; text-underline-offset: 2px; text-decoration-skip-ink: none; }
.field p { padding: 2px 13px 0; font-size: 12px; line-height: 20px; letter-spacing: .4px; color: #d32f2f; }
.alert { height: 48px; border-radius: 4px; background: #fdeded; color: #5f2120; display: flex; align-items: center; gap: 11.5px; padding-left: 16px; font-size: 14px; letter-spacing: .15px; }
.alert svg { fill: #d94a4a; }
.upload { position: relative; border: 1px solid #c8c8c8; border-radius: 5px; padding-left: 15px; }
.upload label { position: absolute; left: 18px; top: -17px; padding: 4px 5px 2px 4px; border-radius: 5px; background: #fff; color: #000; font-size: 14px; line-height: 18px; }
.upload-file { height: 70px; margin: 10px 0 20px; padding-top: 18px; }
.upload-image { height: 72px; padding-top: 19px; }
.upload-image label { left: 20px; top: -17px; }
.outlined { width: 104px; border: 1px solid rgba(25,118,210,.5); color: #1976d2; box-shadow: none; }
.upload-image .outlined { height: 36px; }
.actions { margin-top: 36px; display: flex; justify-content: flex-end; gap: 8px; }
.save { width: 70px; background: #1976d2; }
.cancel { width: 91px; background: #d32f2f; }
.actions .btn { -webkit-text-stroke: .2px #fff; }

/* Browser sidebar */
.edgebar { width: 44px; display: flex; flex-direction: column; align-items: center; padding-top: 6px; }
.edgebar > svg + svg { margin-top: 20px; }
.edgebar > svg:nth-child(2) { margin-top: 18px; }
.edgebar > svg:nth-child(10) { margin-top: 24px; }
.edge-bottom { margin-top: auto; margin-bottom: 13px; display: flex; flex-direction: column; align-items: center; }
.edge-bottom i { width: 28px; height: 1px; background: #777; margin-bottom: 14px; }
.edge-bottom svg + svg { margin-top: 23px; }

/* Taskbar */
.taskbar { height: 48px; border-top: 1px solid #4a4a4a; padding-bottom: 1px; display: flex; align-items: center; font: 12px/16px "Open Sans", "Noto Sans", sans-serif;
  background: linear-gradient(90deg, #222324 0, #242229 80px, #222 170px, #222 310px, #1f2436 380px, #222 460px, #242030 600px, #252133 790px, #18293c 890px, #222135 960px, #222225 1060px, #222 1300px, #232129 1440px, #301b36 1535px, #24203a 1640px, #271e2d 1700px, #3b1d17 1740px, #38271a 1800px, #242825 1870px, #1f2829 1920px); }
.weather { display: flex; align-items: center; gap: 7px; padding-left: 18px; width: 648px; }
.weather div { display: flex; flex-direction: column; }
.weather span { letter-spacing: -.3px; }
.cond { color: #c8c8c8; }
.dock { display: flex; align-items: center; height: 40px; margin-left: 12px; }
.search { width: 220px; height: 32px; margin: 0 2px 0 13px; border-radius: 16px; border: 1px solid #56535e; background: linear-gradient(90deg, #3d3847, #3a3a4b 60%, #2c4457 85%, #374c60); display: flex; align-items: center; padding-left: 10px; color: #d5d5d8; overflow: hidden; }
.search span { margin-left: 10px; letter-spacing: -.35px; font-size: 13.5px; }
.bridge { margin-left: auto; margin-right: 1px; margin-top: 4px; }
.app { width: 40px; height: 40px; margin: 0 2px; border-radius: 4px; display: flex; align-items: center; justify-content: center; position: relative; }
.app i { position: absolute; bottom: 1px; left: 17px; width: 6px; height: 3px; border-radius: 2px; background: #9a9a9a; }
.app.active { background: #2f3237; border: 1px solid #3c3e42; }
.app.active i { width: 16px; left: 11px; bottom: 0; background: #2cecff; }
.app.alerting { background: #452527; }
.app.alerting i { background: #ff99a4; }
.tray { margin-left: auto; display: flex; align-items: center; padding-right: 20px; }
.tr-a, .tr-b, .tr-c, .tr-d { width: 32px; }
.tr-e { width: 15px; }
.tr-f { width: 34px; }
.dropbox { position: relative; width: 16px; height: 14px; }
.dropbox b { position: absolute; left: 0; top: 5px; width: 9px; height: 10px; border-radius: 2px; background: #d0021b; font-size: 8px; line-height: 10px; text-align: center; }
.clock { width: 70px; display: flex; flex-direction: column; text-align: right; white-space: nowrap; align-items: flex-end; }
.count { width: 16px; height: 16px; margin-left: 7px; border-radius: 50%; background: #2cecff; color: #111; text-align: center; font-size: 10.5px; line-height: 16px; }
```
